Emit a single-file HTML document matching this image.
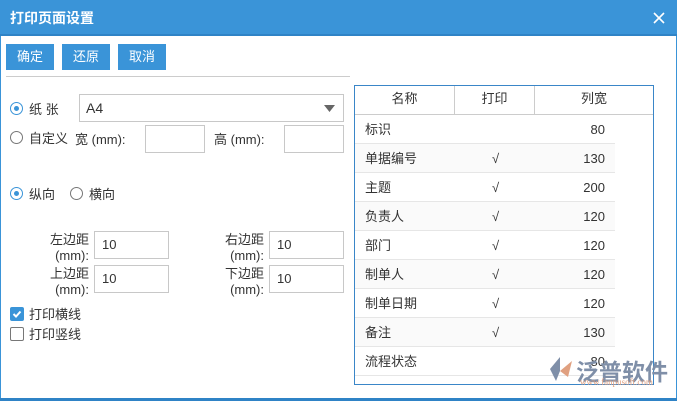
<!DOCTYPE html><html><head><meta charset="utf-8"><style>
body{margin:0;width:677px;height:401px;background:#fff;font-family:"Liberation Sans","Noto Sans CJK SC",sans-serif;font-size:13px;color:#333;position:relative;overflow:hidden}
.a{position:absolute}
.title{left:0;top:0;width:677px;height:36px;background:#3a94d8;color:#fff;font-weight:bold;font-size:14px;line-height:36px;border-bottom:2px solid #2f83c6;box-sizing:border-box}
.btn{top:44px;height:26px;width:48px;background:#3a94d8;color:#fff;font-size:13px;text-align:center;line-height:26px}
.inp{border:1px solid #c8c8c8;background:#fff;box-sizing:border-box}
.rad{width:13px;height:13px;border:1px solid #777;border-radius:50%;box-sizing:border-box}
.rad.on{border-color:#3a94d8}
.rad.on:after{content:"";position:absolute;left:3px;top:3px;width:5px;height:5px;border-radius:50%;background:#3a94d8}
.lbl{text-align:right;line-height:16px;font-size:13px}
.row{left:355px;width:260px;height:29px;line-height:29px;border-bottom:1px solid #e6e6e6;box-sizing:border-box}
.row span{position:absolute}
</style></head><body>
<div class="a" style="left:0;top:0;width:675px;height:399px;border:1px solid #3a94d8"></div>
<div class="a" style="left:0;bottom:0;width:677px;height:3px;background:#2f83c6"></div>
<div class="a title"><span style="margin-left:10px">打印页面设置</span>
<svg style="position:absolute;right:12px;top:12px" width="12" height="12"><path d="M1 1L11 11M11 1L1 11" stroke="#fff" stroke-width="1.6"/></svg></div>
<div class="a btn" style="left:6px">确定</div>
<div class="a btn" style="left:62px">还原</div>
<div class="a btn" style="left:118px">取消</div>
<div class="a" style="left:6px;top:76px;width:344px;height:1px;background:#ccc"></div>

<div class="a rad on" style="left:10px;top:102px"></div>
<div class="a" style="left:29px;top:99px">纸 张</div>
<div class="a inp" style="left:79px;top:94px;width:265px;height:28px;line-height:26px;padding-left:6px;font-size:14px">A4<svg style="position:absolute;right:8px;top:10px" width="11" height="7"><path d="M0 0H11L5.5 7Z" fill="#666"/></svg></div>
<div class="a rad" style="left:10px;top:131px"></div>
<div class="a" style="left:29px;top:128px">自定义</div>
<div class="a" style="left:75px;top:129px">宽 (mm):</div>
<div class="a inp" style="left:145px;top:125px;width:60px;height:28px"></div>
<div class="a" style="left:214px;top:129px">高 (mm):</div>
<div class="a inp" style="left:284px;top:125px;width:60px;height:28px"></div>

<div class="a rad on" style="left:10px;top:187px"></div>
<div class="a" style="left:29px;top:184px">纵向</div>
<div class="a rad" style="left:70px;top:187px"></div>
<div class="a" style="left:89px;top:184px">横向</div>

<div class="a lbl" style="left:30px;top:232px;width:59px">左边距<br>(mm):</div>
<div class="a inp" style="left:94px;top:231px;width:75px;height:28px;line-height:26px;padding-left:7px">10</div>
<div class="a lbl" style="left:200px;top:232px;width:64px">右边距<br>(mm):</div>
<div class="a inp" style="left:269px;top:231px;width:75px;height:28px;line-height:26px;padding-left:7px">10</div>
<div class="a lbl" style="left:30px;top:266px;width:59px">上边距<br>(mm):</div>
<div class="a inp" style="left:94px;top:265px;width:75px;height:28px;line-height:26px;padding-left:7px">10</div>
<div class="a lbl" style="left:200px;top:266px;width:64px">下边距<br>(mm):</div>
<div class="a inp" style="left:269px;top:265px;width:75px;height:28px;line-height:26px;padding-left:7px">10</div>

<div class="a" style="left:10px;top:307px;width:14px;height:14px;background:#3a94d8;border-radius:2px"><svg width="14" height="14"><path d="M3.5 7L6 9.5L10.5 4.5" stroke="#fff" stroke-width="2" fill="none"/></svg></div>
<div class="a" style="left:29px;top:304px">打印横线</div>
<div class="a" style="left:10px;top:327px;width:14px;height:14px;border:1px solid #777;border-radius:2px;box-sizing:border-box"></div>
<div class="a" style="left:29px;top:324px">打印竖线</div>

<div class="a" style="left:354px;top:85px;width:300px;height:300px;border:1px solid #3a86c8;box-sizing:border-box"></div>
<div class="a" style="left:355px;top:86px;width:298px;height:29px;border-bottom:1px solid #ccc;line-height:26px;box-sizing:border-box">
<span class="a" style="left:0;width:99px;text-align:center">名称</span>
<span class="a" style="left:99px;width:1px;height:28px;background:#ccc"></span>
<span class="a" style="left:100px;width:79px;text-align:center">打印</span>
<span class="a" style="left:179px;width:1px;height:28px;background:#ccc"></span>
<span class="a" style="left:180px;width:118px;text-align:center">列宽</span></div>

<div class="a row" style="top:115px"><span style="left:10px">标识</span><span style="right:10px">80</span></div>
<div class="a row" style="top:144px;background:#fafafa"><span style="left:10px">单据编号</span><span style="left:137px">√</span><span style="right:10px">130</span></div>
<div class="a row" style="top:173px"><span style="left:10px">主题</span><span style="left:137px">√</span><span style="right:10px">200</span></div>
<div class="a row" style="top:202px;background:#fafafa"><span style="left:10px">负责人</span><span style="left:137px">√</span><span style="right:10px">120</span></div>
<div class="a row" style="top:231px"><span style="left:10px">部门</span><span style="left:137px">√</span><span style="right:10px">120</span></div>
<div class="a row" style="top:260px;background:#fafafa"><span style="left:10px">制单人</span><span style="left:137px">√</span><span style="right:10px">120</span></div>
<div class="a row" style="top:289px"><span style="left:10px">制单日期</span><span style="left:137px">√</span><span style="right:10px">120</span></div>
<div class="a row" style="top:318px;background:#fafafa"><span style="left:10px">备注</span><span style="left:137px">√</span><span style="right:10px">130</span></div>
<div class="a row" style="top:347px"><span style="left:10px">流程状态</span><span style="right:10px">80</span></div>

<svg class="a" style="left:546px;top:355px" width="30" height="28"><path d="M14 2 L4 14 L10 26 L14 16 Z" fill="#7f8fa8"/><path d="M14 16 L26 6 L22 22 Z" fill="#e0a080"/></svg>
<div class="a" style="left:576px;top:353px;font-size:23px;font-weight:bold;color:#7f8fa8;letter-spacing:0px">泛普软件</div>
<div class="a" style="left:580px;top:377px;font-size:9px;color:#e0a080;font-family:'Liberation Serif',serif">www.fanpusoft.com</div>
</body></html>
